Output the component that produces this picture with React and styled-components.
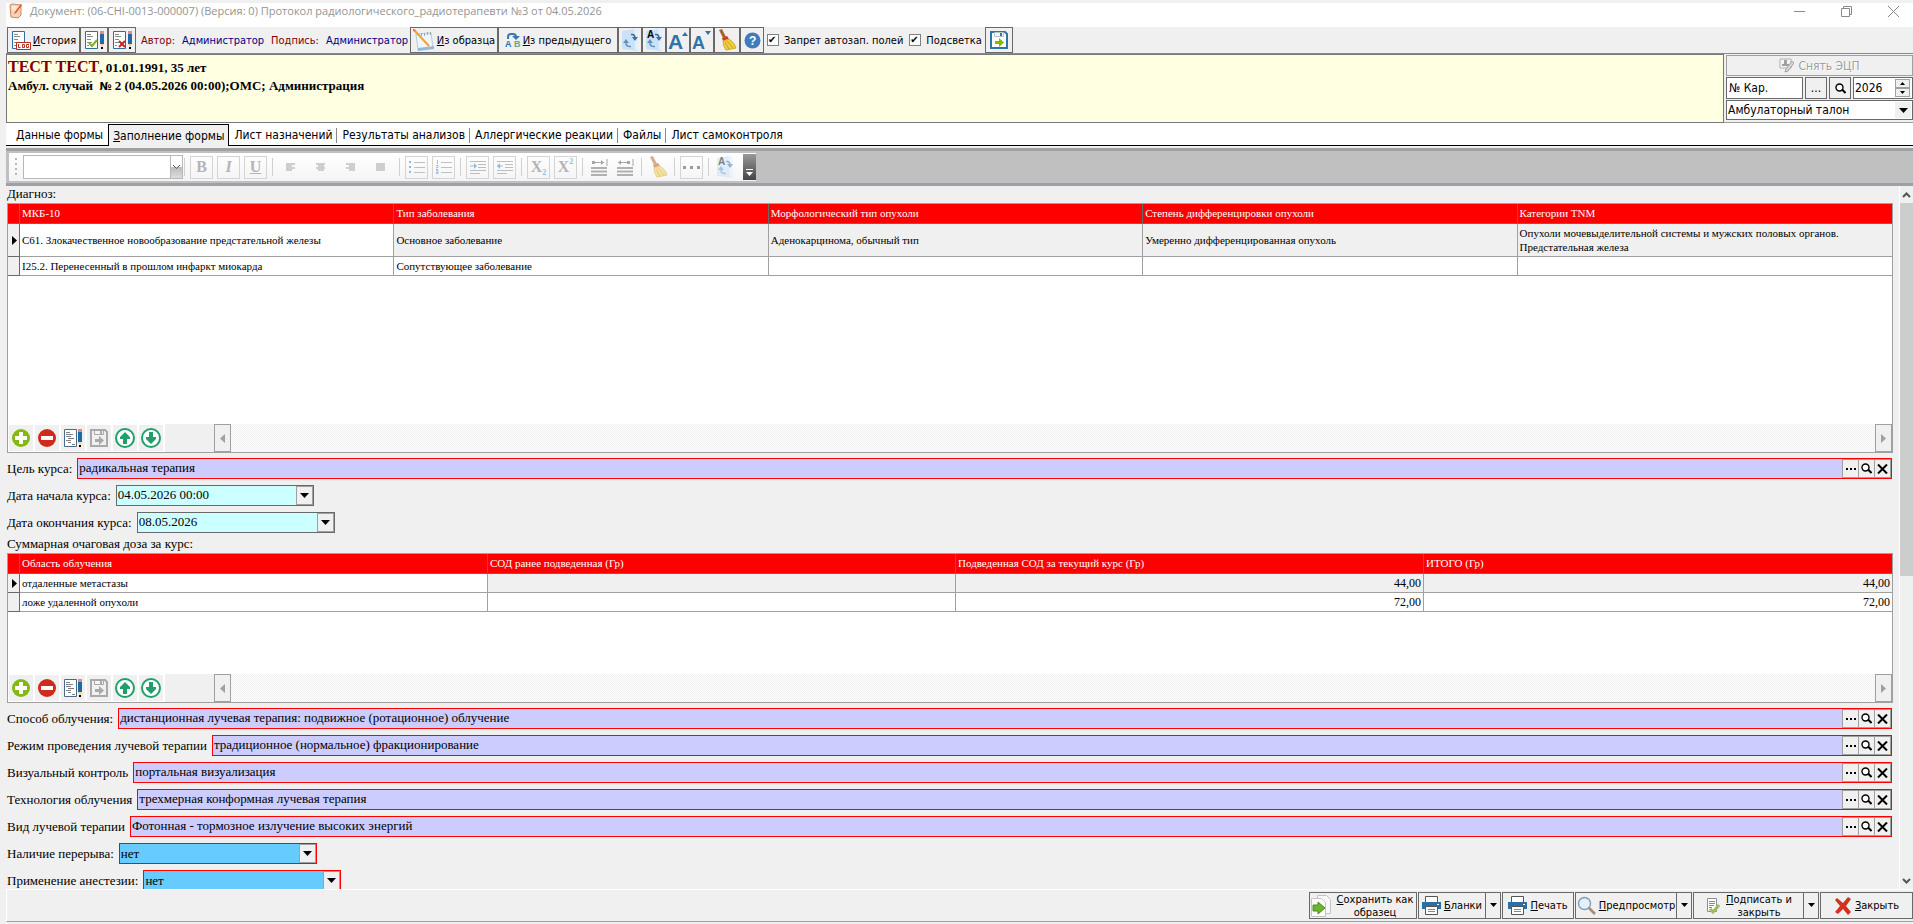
import React, { useState } from 'react'
import styled, { createGlobalStyle, css } from 'styled-components'

const ui = css`
    font-family: 'DejaVu Sans Condensed', 'DejaVu Sans', sans-serif;
`
const serif = css`
    font-family: 'Liberation Serif', serif;
`

const diagnosis = {
    columns: [
        'МКБ-10',
        'Тип заболевания',
        'Морфологический тип опухоли',
        'Степень дифференцировки опухоли',
        'Категории TNM'
    ],
    rows: [
        [
            'C61. Злокачественное новообразование предстательной железы',
            'Основное заболевание',
            'Аденокарцинома, обычный тип',
            'Умеренно дифференцированная опухоль',
            'Опухоли мочевыделительной системы и мужских половых органов. Предстательная железа'
        ],
        [
            'I25.2. Перенесенный в прошлом инфаркт миокарда',
            'Сопутствующее заболевание',
            '',
            '',
            ''
        ]
    ]
}

const dose = {
    columns: [
        'Область облучения',
        'СОД ранее подведенная (Гр)',
        'Подведенная СОД за текущий курс (Гр)',
        'ИТОГО (Гр)'
    ],
    rows: [
        ['отдаленные метастазы', '', '44,00', '44,00'],
        ['ложе удаленной опухоли', '', '72,00', '72,00']
    ]
}

const lookups = [
    {
        id: 'method',
        label: 'Способ облучения:',
        value:
            'дистанционная лучевая терапия: подвижное (ротационное) облучение'
    },
    {
        id: 'mode',
        label: 'Режим проведения лучевой терапии',
        value: 'традиционное (нормальное) фракционирование'
    },
    {
        id: 'control',
        label: 'Визуальный контроль',
        value: 'портальная визуализация'
    },
    {
        id: 'technology',
        label: 'Технология облучения',
        value: 'трехмерная конформная лучевая терапия'
    },
    {
        id: 'kind',
        label: 'Вид лучевой терапии',
        value: 'Фотонная - тормозное излучение высоких энергий'
    }
]

const tabs = [
    'Данные формы',
    'Заполнение формы',
    'Лист назначений',
    'Результаты анализов',
    'Аллергические реакции',
    'Файлы',
    'Лист самоконтроля'
]

/* icons */

const DocIcon = () => (
    <svg width="14" height="16" viewBox="0 0 14 16">
        <path d="M1 2 L3 1 L12 2 L12 12 L9 15 L2 14 Z" fill="#f6d3b5" stroke="#c98962" />
        <path d="M12 1 L13 2 L7 10 L5 11 L6 9 Z" fill="#e24a2b" />
        <path d="M3 4h5M3 6h4" stroke="#fff" />
    </svg>
)

const PageIcon = ({ mark }) => (
    <svg width="20" height="20" viewBox="0 0 20 20">
        <path d="M1.500 1.500h12v17h-12z" fill="#fff" stroke="#2e6f9e" />
        <path d="M3 4.500h4M3 6.500h6M3 9.500h4M3 12.500h5M3 15.500h2" stroke="#8a8a8a" />
        {mark === 'log' && (
            <>
                <path d="M5.500 12.500h14v7h-14z" fill="#fff" stroke="#b5301c" />
                <path
                    d="M7.500 14v3.500h2M11.500 14.500h2v3h-2zM18 14.500h-2.500v3h2v-2"
                    fill="none"
                    stroke="#b5301c"
                />
            </>
        )}
        {(mark === 'ok' || mark === 'no') && (
            <>
                <path d="M16 1h4v3h-4z" fill="#e58a84" />
                <path d="M16 4h4v10h-4z" fill="#1e6ba3" />
                <path d="M16 14h4l-2 3z" fill="#f0cfa0" />
                <path d="M17 17h2v2h-2z" fill="#000" />
            </>
        )}
        {mark === 'ok' && (
            <path d="M5 13 L8 16 L13 10" fill="none" stroke="#7ab51d" strokeWidth="2" />
        )}
        {mark === 'no' && (
            <path d="M7 11 L13 17 M13 11 L7 17" stroke="#c0281c" strokeWidth="2" />
        )}
    </svg>
)

const NotepadIcon = () => (
    <svg width="22" height="22" viewBox="0 0 22 22">
        <path d="M3 5 L18 4 L20 19 L5 21 Z" fill="#eef5fb" stroke="#b8c9da" />
        <path d="M5 19 L21 17 L21 20 L5 22 Z" fill="#8db9dc" />
        <path d="M8.500 4v3M11.500 4v3M14.500 3v3M17.500 3v3" stroke="#9aa7b3" />
        <path d="M1 1 L16 17" stroke="#f0a32c" strokeWidth="2" />
        <path d="M0 0 L2 2" stroke="#e0775c" strokeWidth="2" />
    </svg>
)

const LetterIcon = styled.svg`
    display: block;
    text {
        font-family: 'Liberation Sans', sans-serif;
        font-weight: 700;
    }
`

const AbIcon = () => (
    <LetterIcon width="16" height="16" viewBox="0 0 16 16">
        <path d="M3 7 V5 Q3 2 6 2 H8 Q11 2 11 5" fill="none" stroke="#3c76b0" strokeWidth="2" />
        <path d="M7 4h8l-4 4z" fill="#3c76b0" />
        <text x="0" y="15" fontSize="9" fill="#2f6db3">А</text>
        <text x="9" y="15" fontSize="9" fill="#6aa287">В</text>
    </LetterIcon>
)

const SwapIcon = ({ letter, pale }) => (
    <LetterIcon width="16" height="22" viewBox="0 0 16 22" opacity={pale ? 0.5 : 1}>
        <path d="M0 2 L12 0 L16 2 L16 22 L0 20 Z" fill="#c9e2f8" />
        <path d="M12 0 L16 2 L16 22 L13 20 Z" fill="#e2f0fc" />
        <path d="M9 5.500 H10 Q13 5.500 13 9" fill="none" stroke="#3f6f98" strokeWidth="1.600" />
        <path d="M10 8h6l-3 4z" fill="#3f6f98" />
        <path d="M4 13 V14 Q4 18 9 17.500" fill="none" stroke="#5f93bd" strokeWidth="1.600" />
        <path d="M1 14h6l-3-4z" fill="#5f93bd" />
        {letter && (
            <text x="1" y="9" fontSize="10" fill="#000">А</text>
        )}
    </LetterIcon>
)

const FontIcon = ({ up }) => (
    <LetterIcon width="20" height="22" viewBox="0 0 20 22">
        <text x="0" y="20" fontSize={up ? 21 : 18} fill="#2f74a8">А</text>
        <path d={up ? 'M14 7h6l-3-4z' : 'M13 2h6l-3 4z'} fill="#2f74a8" />
    </LetterIcon>
)

const BroomIcon = ({ pale }) => (
    <svg width="20" height="22" viewBox="0 0 20 22" opacity={pale ? 0.5 : 1}>
        <path d="M2 1 L5 0 L9 8 L6 9 Z" fill="#a8642c" />
        <path d="M5 9 L10 7 L12 10 L6 12 Z" fill="#d23c26" />
        <path d="M6 12 L12 10 Q18 14 19 19 L9 21 Q6 17 6 12 Z" fill="#f0cf3f" stroke="#d0ab2a" />
        <path d="M8 13 L12 20 M10 12 L16 19" stroke="#c9a227" />
    </svg>
)

const HelpIcon = () => (
    <LetterIcon width="17" height="17" viewBox="0 0 17 17">
        <circle cx="8.500" cy="8.500" r="8" fill="#3f7cba" />
        <text x="5" y="13" fontSize="12" fill="#fff">?</text>
    </LetterIcon>
)

const SaveIcon = ({ muted }) => (
    <svg width="18" height="18" viewBox="0 0 18 18">
        <path
            d="M1 1h14l2 2v14H1z"
            fill={muted ? '#f0f0f0' : '#fff'}
            stroke={muted ? '#a9a9a9' : '#2f74a8'}
            strokeWidth="2"
        />
        <path d="M4.500 1.500h9v4h-9z" fill="#f4f4f4" stroke={muted ? '#a9a9a9' : '#b8c4cc'} />
        <path d="M10 2h2v3h-2z" fill={muted ? '#a9a9a9' : '#2f74a8'} />
        <path d="M5 10h4V7l5 4.500L9 16v-3H5z" fill={muted ? '#a9a9a9' : '#84b800'} />
    </svg>
)

const PlusIcon = () => (
    <svg width="18" height="18" viewBox="0 0 18 18">
        <circle cx="9" cy="9" r="9" fill="#84b814" />
        <path d="M9 3v12M3 9h12" stroke="#fff" strokeWidth="4" />
    </svg>
)

const MinusIcon = () => (
    <svg width="18" height="18" viewBox="0 0 18 18">
        <circle cx="9" cy="9" r="9" fill="#d02a1a" />
        <path d="M3 9h12" stroke="#fff" strokeWidth="4" />
    </svg>
)

const EditIcon = () => (
    <svg width="18" height="18" viewBox="0 0 18 18">
        <path d="M0.500 0.500h12v17h-12z" fill="#fff" stroke="#4d6a85" />
        <path
            d="M2 3.500h4M2 5.500h7M2 7.500h5M4 9.500h6M2 11.500h5M4 13.500h3M8 15.500h3"
            stroke="#7b8088"
        />
        <path d="M14 0h4v3h-4z" fill="#e58a84" />
        <path d="M14 3h4v10h-4z" fill="#1e6ba3" />
        <path d="M14 13h4l-2 3z" fill="#f0cfa0" />
        <path d="M15 16h2v2h-2z" fill="#000" />
    </svg>
)

const ArrowIcon = ({ down }) => (
    <svg width="20" height="20" viewBox="0 0 20 20">
        <circle cx="10" cy="10" r="9" fill="#fff" stroke="#1fa06a" strokeWidth="2" />
        <path
            d={down ? 'M8 4h4v5h3v2l-5 5-5-5V9h3z' : 'M8 16h4v-5h3V9l-5-5-5 5v2h3z'}
            fill="#1fa06a"
        />
    </svg>
)

const Triangle = ({ dir = 'down', fill = '#000' }) => (
    <svg width="9" height="9" viewBox="0 0 9 9">
        {dir === 'down' && <path d="M0 2h9L4.500 7z" fill={fill} />}
        {dir === 'left' && <path d="M7 0v9L2 4.500z" fill={fill} />}
        {dir === 'right' && <path d="M2 0v9l5-4.500z" fill={fill} />}
    </svg>
)

const SmallTriangle = () => (
    <svg width="7" height="5" viewBox="0 0 7 5">
        <path d="M0 0h7L3.500 4z" />
    </svg>
)

const SpinIcon = ({ up }) => (
    <svg width="5" height="3" viewBox="0 0 5 3">
        <path d={up ? 'M0 3h5L2.500 0z' : 'M0 0h5L2.500 3z'} />
    </svg>
)

const Chevron = ({ up, thin }) => (
    <svg width="9" height="6" viewBox="0 0 9 6">
        <path
            d={up ? 'M1 5 L4.500 1.500 L8 5' : 'M1 1 L4.500 4.500 L8 1'}
            fill="none"
            stroke="#555"
            strokeWidth={thin ? 1 : 2}
        />
    </svg>
)

const SearchIcon = () => (
    <svg width="11" height="11" viewBox="0 0 11 11">
        <circle cx="4.500" cy="4.500" r="3.500" fill="#fff" stroke="#000" strokeWidth="1.400" />
        <path d="M7 6.500 L10.500 10" stroke="#000" strokeWidth="2" />
    </svg>
)

const CrossIcon = () => (
    <svg width="11" height="10" viewBox="0 0 11 10">
        <path d="M1 0.500 L10 9.500 M10 0.500 L1 9.500" stroke="#000" strokeWidth="2" />
    </svg>
)

const DotsIcon = ({ muted }) => (
    <svg width={muted ? 17 : 10} height={muted ? 3 : 2}>
        {muted ? (
            <path d="M0 0h3v3H0zM7 0h3v3H7zM14 0h3v3h-3z" fill="#9b9b9b" />
        ) : (
            <path d="M0 0h2v2H0zM4 0h2v2H4zM8 0h2v2H8z" />
        )}
    </svg>
)

const StampIcon = () => (
    <svg width="15" height="15" viewBox="0 0 15 15">
        <path d="M1 1h11v9H1z" fill="#f4f4f4" stroke="#b0b0b0" />
        <path d="M5 2h3v4h2v2H3V6h2z" fill="#a0a0a0" />
        <path d="M13 3l2 2-6 8-3 1 1-3z" fill="#d8d8d8" stroke="#a0a0a0" />
    </svg>
)

const AlignIcon = ({ type }) => (
    <svg width="10" height="9" viewBox="0 0 10 9">
        <path
            d={
                {
                    left: 'M0 1h9M0 3h6M0 5h9M0 7h6',
                    center: 'M0 1h9M2 3h6M0 5h9M2 7h6',
                    right: 'M0 1h9M3 3h6M0 5h9M3 7h6',
                    full: 'M0 1h9M0 3h9M0 5h9M0 7h9'
                }[type]
            }
            stroke="#c0c0c0"
            strokeWidth="1.600"
        />
    </svg>
)

const ListIcon = ({ numbered }) => (
    <svg width="16" height="14" viewBox="0 0 16 14">
        <path d="M5 2.500h11M5 7.500h11M5 12.500h11" stroke="#c0c0c0" />
        {numbered ? (
            <path d="M1.500 0v4M0 5.500h2v2H0v2h2M0 10.500h2v3H0M0 12.500h2" fill="none" stroke="#9cc3e6" />
        ) : (
            <path d="M0 1h2v2H0zM0 6h2v2H0zM0 11h2v2H0z" fill="#8dbce6" />
        )}
    </svg>
)

const IndentIcon = ({ out }) => (
    <svg width="16" height="14" viewBox="0 0 16 14">
        <path d="M0 1.500h16M8 4.500h8M8 7.500h8M0 10.500h16M0 13.500h10" stroke="#bdbdbd" />
        <path d="M0 6h6" stroke="#8dbce6" />
        <path d={out ? 'M0 6l3-3v6z' : 'M7 6L4 3v6z'} fill="#8dbce6" />
    </svg>
)

const SpacingIcon = ({ out }) => (
    <svg width="17" height="17" viewBox="0 0 17 17">
        <path d="M1 3.500h12M16 0v7" stroke="#a6a6a6" strokeWidth="1" />
        <path d={out ? 'M4 1v5L1 3.500z M10 2h3v3h-3z' : 'M10 1v5l3-2.500z M1 2h3v3H1z'} fill="#a6a6a6" />
        <path d="M0 9h16M0 12.500h16M0 16h16" stroke="#b0b0b0" strokeWidth="2" />
    </svg>
)

const CopyIcon = () => (
    <svg width="21" height="22" viewBox="0 0 21 22">
        <path d="M7.500 0.500h9l4 4v14h-13z" fill="#f8f8f8" stroke="#c4c4c4" />
        <path d="M1.500 3.500h10l4 4v14h-14z" fill="#fdfdfd" stroke="#c4c4c4" />
        <path d="M3 10h5V7l7 6-7 6v-3H3z" fill="#6cb52c" stroke="#4c8a22" />
    </svg>
)

const PrinterIcon = () => (
    <svg width="19" height="19" viewBox="0 0 19 19">
        <path d="M3.500 0.500h12v6h-12z" fill="#fff" stroke="#555" />
        <path d="M0 6h19v7H0z" fill="#2c6ea6" />
        <path d="M15 8h2v1h-2z" fill="#fff" />
        <path d="M3.500 10.500h12v8h-12z" fill="#fff" stroke="#555" />
        <path d="M6 13.500h7M6 15.500h7" stroke="#888" />
    </svg>
)

const LensIcon = () => (
    <svg width="19" height="19" viewBox="0 0 19 19">
        <circle cx="7.500" cy="7.500" r="6" fill="#e3eff9" stroke="#7d9cbb" strokeWidth="1.400" />
        <path d="M12 12 L18 18" stroke="#a98c78" strokeWidth="2.600" />
    </svg>
)

const SignIcon = () => (
    <svg width="14" height="17" viewBox="0 0 14 17">
        <path d="M1.500 1.500h9v13h-9z" fill="#fff" stroke="#8a8f96" />
        <path d="M3 4.500h6M3 6.500h6M3 8.500h5M3 10.500h3" stroke="#888" />
        <path d="M4 12l3 3 6-7" fill="none" stroke="#9dbc5e" strokeWidth="3" />
    </svg>
)

const RedCross = () => (
    <svg width="18" height="18" viewBox="0 0 18 18">
        <path
            d="M3 1 L9 6 L14 0 L17 2 L12 9 L17 15 L14 18 L9 12 L4 17 L1 15 L6 9 L1 3 Z"
            fill="#d4311f"
        />
    </svg>
)

const Caption = ({ children }) => (
    <span>
        <u>{children[0]}</u>
        {children.slice(1)}
    </span>
)

const Grid = ({ name, columns, rows, tall }) => (
    <GridBox $tall={tall}>
        <GridBody>
            <Table aria-label={name}>
                <colgroup>
                    <MarkCol />
                    {columns.map(c => (
                        <col key={c} />
                    ))}
                </colgroup>
                <thead>
                    <tr>
                        <Th />
                        {columns.map(c => (
                            <Th key={c}>{c}</Th>
                        ))}
                    </tr>
                </thead>
                <tbody>
                    {rows.map((row, i) => (
                        <tr key={row[0]}>
                            <Mark>
                                {i === 0 && <Triangle dir="right" />}
                            </Mark>
                            {row.map((cell, j) => (
                                <Td
                                    key={j}
                                    $active={i === 0 && j > 0}
                                    $numeric={/^\d+,\d+$/.test(cell)}
                                    $high={tall && i === 0}
                                >
                                    {cell}
                                </Td>
                            ))}
                        </tr>
                    ))}
                </tbody>
            </Table>
        </GridBody>
        <Navigator>
            <NavButton aria-label="Добавить"><PlusIcon /></NavButton>
            <NavButton aria-label="Удалить"><MinusIcon /></NavButton>
            <NavButton aria-label="Изменить"><EditIcon /></NavButton>
            <NavButton aria-label="Сохранить"><SaveIcon muted /></NavButton>
            <NavButton aria-label="Вверх"><ArrowIcon /></NavButton>
            <NavButton aria-label="Вниз"><ArrowIcon down /></NavButton>
            <NavTrack>
                <NavSpace />
                <NavArrow aria-label="Влево"><Triangle dir="left" fill="#a0a0a0" /></NavArrow>
                <Dither />
                <NavArrow aria-label="Вправо"><Triangle dir="right" fill="#a0a0a0" /></NavArrow>
            </NavTrack>
        </Navigator>
    </GridBox>
)

const Lookup = ({ id, label, value }) => (
    <FieldRow>
        <label htmlFor={id}>{label}</label>
        <FieldBox $wide $required $fill="#ccccff">
            <FieldInput id={id} defaultValue={value} />
            <FieldButton aria-label="Список"><DotsIcon /></FieldButton>
            <FieldButton aria-label="Поиск"><SearchIcon /></FieldButton>
            <FieldButton aria-label="Очистить"><CrossIcon /></FieldButton>
        </FieldBox>
    </FieldRow>
)

const DateField = ({ id, label, value }) => (
    <FieldRow>
        <label htmlFor={id}>{label}</label>
        <FieldBox $fill="#ccffff">
            <FieldInput id={id} defaultValue={value} />
            <FieldButton aria-label="Календарь"><Triangle /></FieldButton>
        </FieldBox>
    </FieldRow>
)

const SelectField = ({ id, label }) => (
    <FieldRow>
        <label htmlFor={id}>{label}</label>
        <FieldBox $required $fill="#66ccff">
            <FieldSelect id={id} defaultValue="нет">
                <option>нет</option>
                <option>да</option>
            </FieldSelect>
            <FieldArrow><Triangle /></FieldArrow>
        </FieldBox>
    </FieldRow>
)

function App() {
    const [active, setActive] = useState(1)

    return (
        <Window>
            <GlobalStyle />
            <TitleBar>
                <DocIcon />
                <Title>
                    Документ: (06-CHI-0013-000007) (Версия: 0) Протокол
                    радиологического_радиотерапевти №3 от 04.05.2026
                </Title>
                <WindowButton aria-label="Свернуть">
                    <svg width="11" height="11"><path d="M0 5.500h11" stroke="#8a8a8a" /></svg>
                </WindowButton>
                <WindowButton aria-label="Развернуть">
                    <svg width="11" height="11">
                        <path d="M0.500 2.500h8v8h-8zM2.500 2.500v-2h8v8h-2" fill="none" stroke="#8a8a8a" />
                    </svg>
                </WindowButton>
                <WindowButton aria-label="Закрыть окно">
                    <svg width="11" height="11"><path d="M0 0L11 11M11 0L0 11" stroke="#8a8a8a" /></svg>
                </WindowButton>
            </TitleBar>

            <Toolbar>
                <ToolButton $width={73}>
                    <PageIcon mark="log" />
                    <Caption>История</Caption>
                </ToolButton>
                <ToolButton $width={28} aria-label="Подписать"><PageIcon mark="ok" /></ToolButton>
                <ToolButton $width={28} aria-label="Отменить подпись"><PageIcon mark="no" /></ToolButton>
                <Authors>
                    <span>Автор:</span>
                    <b>Администратор</b>
                    <span>Подпись:</span>
                    <b>Администратор</b>
                </Authors>
                <ToolButton $width={88}>
                    <NotepadIcon />
                    <Caption>Из образца</Caption>
                </ToolButton>
                <ToolButton $width={120}>
                    <AbIcon />
                    <Caption>Из предыдущего</Caption>
                </ToolButton>
                <ToolButton $width={24} aria-label="Обновить"><SwapIcon /></ToolButton>
                <ToolButton $width={24} aria-label="Обновить текст"><SwapIcon letter /></ToolButton>
                <ToolButton $width={24} aria-label="Крупнее"><FontIcon up /></ToolButton>
                <ToolButton $width={24} aria-label="Мельче"><FontIcon /></ToolButton>
                <ToolButton $width={26} aria-label="Очистить форму"><BroomIcon /></ToolButton>
                <ToolButton $width={24} aria-label="Справка"><HelpIcon /></ToolButton>
                <Check>
                    <input type="checkbox" defaultChecked />
                    Запрет автозап. полей
                </Check>
                <Check>
                    <input type="checkbox" defaultChecked />
                    Подсветка
                </Check>
                <ToolButton $width={28} aria-label="Сохранить"><SaveIcon /></ToolButton>
            </Toolbar>

            <Header>
                <Patient>
                    <p>
                        <em>ТЕСТ ТЕСТ</em>, 01.01.1991, 35 лет
                    </p>
                    <p>
                        Амбул. случай &nbsp;<i>№</i> 2 (04.05.2026 00:00);ОМС;
                        Администрация
                    </p>
                </Patient>
                <Side>
                    <SignButton disabled>
                        <StampIcon />
                        Снять ЭЦП
                    </SignButton>
                    <SideRow>
                        <SideInput aria-label="Номер карты" defaultValue="№ Кар." />
                        <SideButton>...</SideButton>
                        <SideButton aria-label="Найти карту"><SearchIcon /></SideButton>
                        <YearBox>
                            <input aria-label="Год" defaultValue="2026" />
                            <Spin>
                                <button aria-label="Больше"><SpinIcon up /></button>
                                <button aria-label="Меньше"><SpinIcon /></button>
                            </Spin>
                        </YearBox>
                    </SideRow>
                    <SideSelect>
                        <select aria-label="Вид талона">
                            <option>Амбулаторный талон</option>
                        </select>
                        <span><Triangle /></span>
                    </SideSelect>
                </Side>
            </Header>

            <Tabs role="tablist">
                {tabs.map((tab, i) => (
                    <Tab
                        key={tab}
                        role="tab"
                        aria-selected={i === active}
                        $active={i === active}
                        $split={i > active && i < tabs.length - 1}
                        onClick={() => setActive(i)}
                    >
                        {i < 2 ? <Caption>{tab}</Caption> : tab}
                    </Tab>
                ))}
            </Tabs>

            <FormatBar>
                <FormatTools>
                    <Grip />
                    <FontBox>
                        <select aria-label="Шрифт" disabled />
                        <span><Chevron thin /></span>
                    </FontBox>
                    <Split />
                    <FormatButton disabled><b>B</b></FormatButton>
                    <FormatButton disabled><i>I</i></FormatButton>
                    <FormatButton disabled><u>U</u></FormatButton>
                    <Split />
                    <FormatButton $flat={26} disabled aria-label="По левому краю"><AlignIcon type="left" /></FormatButton>
                    <FormatButton $flat={26} disabled aria-label="По центру"><AlignIcon type="center" /></FormatButton>
                    <FormatButton $flat={26} disabled aria-label="По правому краю"><AlignIcon type="right" /></FormatButton>
                    <FormatButton $flat={26} disabled aria-label="По ширине"><AlignIcon type="full" /></FormatButton>
                    <Split />
                    <FormatButton disabled aria-label="Маркеры"><ListIcon /></FormatButton>
                    <FormatButton disabled aria-label="Нумерация"><ListIcon numbered /></FormatButton>
                    <Split />
                    <FormatButton disabled aria-label="Увеличить отступ"><IndentIcon /></FormatButton>
                    <FormatButton disabled aria-label="Уменьшить отступ"><IndentIcon out /></FormatButton>
                    <Split />
                    <FormatButton disabled>X<sub>2</sub></FormatButton>
                    <FormatButton disabled>X<sup>2</sup></FormatButton>
                    <Split />
                    <FormatButton $flat={22} disabled aria-label="Шире"><SpacingIcon /></FormatButton>
                    <FormatButton $flat={22} disabled aria-label="Уже"><SpacingIcon out /></FormatButton>
                    <Split />
                    <FormatButton $flat={22} disabled aria-label="Очистить формат"><BroomIcon pale /></FormatButton>
                    <Split />
                    <FormatButton disabled aria-label="Ещё"><DotsIcon muted /></FormatButton>
                    <Split />
                    <FormatButton $flat={22} disabled aria-label="Заменить"><SwapIcon letter pale /></FormatButton>
                    <More aria-label="Настроить панель">
                        <svg width="7" height="7">
                            <path d="M0 0.500h7" stroke="#fff" />
                            <path d="M0 3h7L3.500 7z" fill="#fff" />
                        </svg>
                    </More>
                </FormatTools>
            </FormatBar>

            <Content>
                <Fields>
                    <Section>Диагноз:</Section>
                    <Grid name="Диагноз" tall {...diagnosis} />
                    <Lookup id="goal" label="Цель курса:" value="радикальная терапия" />
                    <DateField id="start" label="Дата начала курса:" value="04.05.2026 00:00" />
                    <DateField id="end" label="Дата окончания курса:" value="08.05.2026" />
                    <Section $spaced>Суммарная очаговая доза за курс:</Section>
                    <Grid name="Суммарная очаговая доза за курс" {...dose} />
                    {lookups.map(item => (
                        <Lookup key={item.id} {...item} />
                    ))}
                    <SelectField id="pause" label="Наличие перерыва:" />
                    <SelectField id="anesthesia" label="Применение анестезии:" />
                </Fields>
                <ScrollBar>
                    <button aria-label="Прокрутить вверх"><Chevron up /></button>
                    <Thumb />
                    <button aria-label="Прокрутить вниз"><Chevron /></button>
                </ScrollBar>
            </Content>

            <Footer>
                <FooterButton $width={108}>
                    <CopyIcon />
                    <Caption>Сохранить как образец</Caption>
                </FooterButton>
                <ButtonGroup>
                    <FooterButton $width={68}>
                        <PrinterIcon />
                        <Caption>Бланки</Caption>
                    </FooterButton>
                    <FooterButton $width={15} aria-label="Список бланков"><SmallTriangle /></FooterButton>
                </ButtonGroup>
                <FooterButton $width={72}>
                    <PrinterIcon />
                    <Caption>Печать</Caption>
                </FooterButton>
                <ButtonGroup>
                    <FooterButton $width={102}>
                        <LensIcon />
                        <Caption>Предпросмотр</Caption>
                    </FooterButton>
                    <FooterButton $width={15} aria-label="Варианты просмотра"><SmallTriangle /></FooterButton>
                </ButtonGroup>
                <ButtonGroup>
                    <FooterButton $width={111} $spread>
                        <SignIcon />
                        <Caption>Подписать и закрыть</Caption>
                    </FooterButton>
                    <FooterButton $width={15} aria-label="Варианты подписи"><SmallTriangle /></FooterButton>
                </ButtonGroup>
                <FooterButton $width={93}>
                    <RedCross />
                    <Caption>Закрыть</Caption>
                </FooterButton>
            </Footer>
        </Window>
    )
}

const GlobalStyle = createGlobalStyle`
    * {
        box-sizing: border-box;
    }
    body {
        margin: 0;
        background: #f0f0f0;
        color: #000;
    }
    button, input, select {
        margin: 0;
        padding: 0;
        border: 0;
        border-radius: 0;
        background: none;
        color: inherit;
        font: inherit;
        outline: none;
        appearance: none;
    }
    p {
        margin: 0;
    }
    svg {
        display: block;
        flex: none;
    }
`

const Window = styled.div`
    ${ui}
    display: flex;
    flex-direction: column;
    height: 100vh;
    padding: 3px 0 2px 6px;
    font-size: 11px;
    overflow: hidden;
`

const TitleBar = styled.header`
    display: flex;
    align-items: center;
    flex: none;
    gap: 7px;
    height: 24px;
    padding: 0 0 8px 3px;
    background: #fff;
`

const Title = styled.h1`
    flex: 1;
    margin: 0;
    color: #949494;
    font-family: 'Open Sans', sans-serif;
    font-size: 11px;
    font-weight: 400;
    line-height: 16px;
`

const WindowButton = styled.button`
    display: flex;
    justify-content: center;
    width: 40px;
`

const Toolbar = styled.div`
    display: flex;
    flex: none;
    height: 27px;
    padding-left: 1px;
    border-bottom: 1px solid #8a8a8a;
`

const ToolButton = styled.button`
    display: flex;
    align-items: center;
    justify-content: center;
    flex: none;
    gap: 2px;
    width: ${p => p.$width}px;
    height: 26px;
    border: 1px solid #696969;
    white-space: nowrap;
`

const Authors = styled.div`
    display: flex;
    align-items: center;
    justify-content: space-between;
    flex: none;
    width: 274px;
    padding: 0 2px 0 5px;
    color: #800000;
    b {
        color: #000080;
        font-weight: 400;
    }
`

const Check = styled.label`
    display: flex;
    align-items: center;
    gap: 5px;
    padding: 0 3px;
    input {
        width: 12px;
        height: 12px;
        border: 1px solid #808080;
        background: #fff;
    }
    input:checked::before {
        content: '✔';
        display: block;
        font-family: 'DejaVu Sans', sans-serif;
        font-size: 10px;
        line-height: 10px;
    }
`

const Header = styled.div`
    display: flex;
    flex: none;
    height: 69px;
`

const Patient = styled.div`
    ${serif}
    flex: 1;
    padding: 3px 1px;
    border: 1px solid #77777b;
    background: #ffffe1;
    font-size: 13px;
    font-weight: 700;
    line-height: 18px;
    em {
        color: #800000;
        font-size: 16px;
        font-style: normal;
    }
    i {
        font-family: 'DejaVu Sans Condensed', sans-serif;
        font-size: 11px;
        font-style: normal;
    }
`

const Side = styled.div`
    ${ui}
    display: flex;
    flex-direction: column;
    gap: 1px;
    width: 189px;
    padding: 1px 0 0 2px;
    border-bottom: 1px solid #a0a0a0;
    font-size: 12px;
`

const SignButton = styled.button`
    display: flex;
    align-items: center;
    justify-content: center;
    gap: 4px;
    height: 21px;
    border: 1px solid #a0a0a0;
    color: #a0a0a0;
    text-shadow: 1px 1px 0 #fff;
`

const SideRow = styled.div`
    display: flex;
    gap: 2px;
    height: 22px;
`

const SideInput = styled.input`
    width: 77px;
    padding: 0 2px;
    border: 1px solid #696969;
    background: #fff;
`

const SideButton = styled.button`
    display: flex;
    align-items: center;
    justify-content: center;
    width: 22px;
    border: 1px solid #696969;
`

const YearBox = styled.div`
    display: flex;
    flex: 1;
    padding: 1px 2px 1px 1px;
    border: 1px solid #696969;
    background: #fff;
    input {
        flex: 1;
        width: 0;
    }
`

const Spin = styled.div`
    display: flex;
    flex-direction: column;
    width: 15px;
    button {
        display: flex;
        flex: 1;
        align-items: center;
        justify-content: center;
        border: 1px solid #a0a0a0;
        background: #f0f0f0;
    }
`

const SideSelect = styled.div`
    display: grid;
    grid-template-columns: 1fr 16px;
    height: 20px;
    padding: 1px;
    border: 1px solid #696969;
    background: #fff;
    select {
        grid-area: 1 / 1 / 2 / 3;
    }
    span {
        display: grid;
        grid-area: 1 / 2 / 2 / 3;
        place-items: center;
        background: #f0f0f0;
        pointer-events: none;
    }
`

const Tabs = styled.div`
    ${ui}
    display: flex;
    align-items: flex-end;
    flex: none;
    height: 23px;
    padding-left: 5px;
    background: #fff;
    border-bottom: 1px solid #000;
    font-size: 12px;
`

const Tab = styled.button`
    height: 20px;
    padding: 0 5px;
    line-height: 20px;
    white-space: nowrap;
    ${p =>
        p.$active &&
        css`
            height: 22px;
            margin-bottom: -1px;
            padding: 0 4px;
            border: 1px solid #000;
            border-bottom: 0;
            background: #f0f0f0;
        `}
    ${p =>
        p.$split &&
        css`
            background: linear-gradient(#888, #888) right center / 1px 15px
                no-repeat;
        `}
`

const FormatBar = styled.div`
    flex: none;
    margin-top: 2px;
    padding: 2px 3px;
    border: solid #a0a0a4;
    border-width: 3px 0;
    background: #c0c0c0;
`

const FormatTools = styled.div`
    display: flex;
    align-items: center;
    gap: 4px;
    width: 747px;
    height: 28px;
    padding-left: 6px;
    background: linear-gradient(#fff, #f4f4f4);
`

const Grip = styled.div`
    width: 2px;
    height: 19px;
    margin-right: 2px;
    background: repeating-linear-gradient(#b8b8b8 0 2px, transparent 2px 5px);
`

const FontBox = styled.div`
    display: grid;
    grid-template-columns: 1fr 12px;
    width: 160px;
    height: 24px;
    margin-right: -4px;
    border: 1px solid #b8b8b8;
    background: #fff;
    select {
        grid-area: 1 / 1 / 2 / 3;
    }
    span {
        display: grid;
        grid-area: 1 / 2 / 2 / 3;
        place-items: center;
        border-left: 1px solid #b8b8b8;
        background: linear-gradient(#fff 50%, #bbb 50%, #ddd);
    }
`

const Split = styled.div`
    width: 1px;
    height: 18px;
    margin: 0 1px;
    background: #d0d0d0;
`

const FormatButton = styled.button`
    display: flex;
    align-items: center;
    justify-content: center;
    flex: none;
    width: ${p => p.$flat || 23}px;
    height: 23px;
    border: ${p => (p.$flat ? 0 : '1px solid #d4d4d4')};
    ${serif}
    color: #b4b4b4;
    font-size: 16px;
    font-weight: 700;
    line-height: 18px;
    sub,
    sup {
        color: #8dbce6;
        font-size: 8px;
        line-height: 10px;
    }
    sub {
        align-self: flex-end;
    }
    sup {
        align-self: flex-start;
    }
`

const More = styled.button`
    display: flex;
    align-items: flex-end;
    justify-content: center;
    width: 13px;
    height: 26px;
    margin-left: auto;
    padding-bottom: 4px;
    background: linear-gradient(#999, #444);
`

const Content = styled.main`
    display: flex;
    flex: 1;
    min-height: 0;
    overflow: hidden;
`

const Fields = styled.div`
    ${serif}
    flex: 1;
    min-width: 0;
    padding: 0 6px 0 1px;
    font-size: 13px;
`

const Section = styled.div`
    padding: ${p => (p.$spaced ? 2 : 0)}px 0 2px;
    line-height: 15px;
`

const GridBox = styled.div`
    display: flex;
    flex-direction: column;
    height: ${p => (p.$tall ? 250 : 150)}px;
    border: 1px solid #a0a0a0;
    background: #fff;
`

const GridBody = styled.div`
    flex: 1;
`

const Table = styled.table`
    width: 100%;
    border-spacing: 0;
    table-layout: fixed;
    font-size: 11px;
    line-height: 14px;
`

const MarkCol = styled.col`
    width: 12px;
`

const Th = styled.th`
    height: 20px;
    padding: 0 2px 2px;
    border-right: 1px solid #696969;
    border-bottom: 1px solid #696969;
    background: #ff0000;
    color: #fff;
    font-weight: 400;
    text-align: left;
    &:last-child {
        border-right: 0;
    }
`

const Td = styled.td`
    height: ${p => (p.$high ? 33 : 19)}px;
    padding: 0 2px;
    border-right: 1px solid #a0a0a0;
    border-bottom: 1px solid #a0a0a0;
    background: ${p => (p.$active ? '#f0f0f0' : '#fff')};
    font-size: ${p => (p.$numeric ? 12 : 11)}px;
    text-align: ${p => (p.$numeric ? 'right' : 'left')};
    &:last-child {
        border-right: 0;
    }
`

const Mark = styled.td`
    padding: 0 0 0 2px;
    border-right: 1px solid #696969;
    border-bottom: 1px solid #696969;
    background: #f0f0f0;
`

const Navigator = styled.div`
    display: flex;
    gap: 2px;
    height: 28px;
    padding-left: 1px;
`

const NavButton = styled.button`
    display: flex;
    align-items: center;
    justify-content: center;
    flex: none;
    width: 24px;
    margin: 1px 0;
    background: #f0f0f0;
`

const NavTrack = styled.div`
    display: flex;
    flex: 1;
`

const NavSpace = styled.div`
    width: 49px;
    background: #f0f0f0;
`

const Dither = styled.div`
    flex: 1;
    background: repeating-conic-gradient(#f0f0f0 0 25%, #fff 0 50%) 0 0 / 2px 2px;
`

const NavArrow = styled.button`
    display: flex;
    align-items: center;
    justify-content: center;
    width: 17px;
    border: 1px solid #a0a0a0;
    background: #f0f0f0;
`

const FieldRow = styled.div`
    display: flex;
    align-items: center;
    gap: 5px;
    height: 27px;
    padding: 5px 1px 1px 0;
    white-space: nowrap;
`

const FieldBox = styled.div`
    display: flex;
    flex: ${p => (p.$wide ? '1' : 'none')};
    width: ${p => (p.$wide ? 'auto' : '198px')};
    height: 21px;
    border: 1px solid ${p => (p.$required ? '#ff0000' : '#696969')};
    background: ${p => p.$fill};
`

const FieldInput = styled.input`
    flex: 1;
    width: 0;
    padding: 0 1px 2px;
`

const FieldSelect = styled.select`
    flex: 1;
    padding: 0 1px 1px;
`

const FieldButton = styled.button`
    display: flex;
    align-items: center;
    justify-content: center;
    width: 17px;
    border: 1px solid #a0a0a0;
    background: #f0f0f0;
    & + & {
        margin-left: -1px;
    }
`

const FieldArrow = styled.span`
    display: grid;
    place-items: center;
    width: 17px;
    border: 1px solid #a0a0a0;
    background: #f0f0f0;
`

const ScrollBar = styled.div`
    display: flex;
    flex-direction: column;
    width: 14px;
    border-left: 1px solid #fff;
    background: #f0f0f0;
    button {
        display: flex;
        align-items: center;
        justify-content: center;
        height: 17px;
    }
    button:last-child {
        margin-top: auto;
    }
`

const Thumb = styled.div`
    height: 53%;
    background: #cdcdcd;
`

const Footer = styled.footer`
    display: flex;
    flex: none;
    justify-content: flex-end;
    gap: 1px;
    padding: 2px 0;
    border: solid #fff;
    border-width: 1px 0 1px 1px;
    border-bottom-color: #a0a0a0;
`

const ButtonGroup = styled.div`
    display: flex;
`

const FooterButton = styled.button`
    display: flex;
    align-items: center;
    justify-content: center;
    gap: 3px;
    width: ${p => p.$width}px;
    height: 27px;
    border: 1px solid #696969;
    font-size: 11px;
    line-height: 13px;
    & + & {
        border-left: 0;
    }
    ${Footer} > & {
        border-left: 1px solid #696969;
    }
    ${p =>
        p.$spread &&
        css`
            padding: 0 8px 0 12px;
            span {
                flex: 1;
            }
        `}
`

export default App
